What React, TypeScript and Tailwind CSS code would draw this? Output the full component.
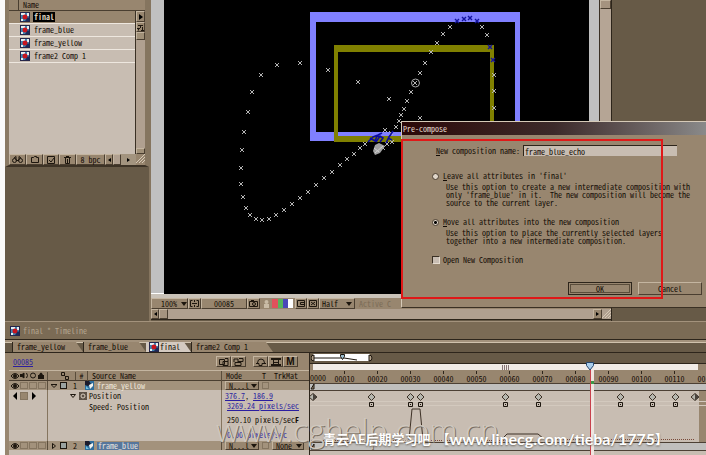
import React from "react";

const mono =
  "font-['Noto_Sans_Mono_CJK_SC','Noto_Sans_CJK_SC',monospace] [font-feature-settings:'hwid'] text-[8px] leading-[10px] text-[#140c05]";
const raised = "border border-t-[#c4b5a0] border-l-[#c4b5a0] border-r-[#4a3e30] border-b-[#4a3e30]";

type Point = [number, number];

const pathPoints: Point[] = [
  [389, 99], [358, 82], [328, 70], [300, 63], [277, 65], [261, 75], [252, 92], [248, 112], [244, 132],
  [242, 150], [241, 168], [241, 184], [243, 197], [246, 208], [250, 215], [256, 219], [262, 220],
  [269, 219], [276, 215], [284, 210], [292, 204], [300, 198], [308, 192], [316, 185], [324, 178],
  [332, 172], [340, 165], [347, 159], [354, 154], [360, 148], [365, 144], [385, 130], [391, 133], [396, 127],
  [399, 121], [401, 115], [404, 109], [407, 101], [411, 92], [415, 83], [420, 73], [425, 63],
  [431, 52], [437, 43], [443, 34], [450, 27], [482, 27], [487, 35], [494, 75],
  [494, 91], [494, 108], [420, 118], [383, 148], [387, 144], [392, 142],
];
const bluePoints: Point[] = [
  [457, 21], [464, 19], [470, 18], [477, 21], [490, 47], [493, 60],
];

const crosses = (points: Point[]) =>
  points.map(([x, y]) => `M${x - 2} ${y - 2}l4 4m0-4l-4 4`).join("");

function CompIcon() {
  return (
    <svg width="10" height="10" viewBox="0 0 10 10" className="shrink-0" aria-hidden="true">
      <rect width="10" height="10" fill="#26264a" />
      <rect x="1" y="1" width="8" height="8" fill="#3f86b4" />
      <path d="M1 1h4v2H1zM7 1h2v3H7zM1 7h2v2H1z" fill="#e8eef2" />
      <circle cx="5" cy="5" r="2.500" fill="#c8141e" />
      <path d="M5 9l3-4 1 1v3z" fill="#1c2a5c" />
    </svg>
  );
}

function LayerIcon() {
  return (
    <svg width="9" height="9" viewBox="0 0 9 9" className="shrink-0" aria-hidden="true">
      <rect width="9" height="9" fill="#2f6d9c" />
      <path d="M0 0h4l2 3-3 2-3-1z" fill="#1c1c2c" />
      <path d="M4 4l4-2v3l-3 3z" fill="#f2f2ee" />
      <path d="M1 5l3 3H1z" fill="#77c4dd" />
    </svg>
  );
}

function Eye() {
  return (
    <svg width="8" height="8" viewBox="0 0 8 8" className="shrink-0" aria-hidden="true">
      <path d="M0 4q4-5 8 0q-4 5-8 0z" fill="none" stroke="#1d160e" />
      <circle cx="4" cy="4" r="2" fill="#1d160e" />
    </svg>
  );
}

const projectItems = ["final", "frame_blue", "frame_yellow", "frame2 Comp 1"];

function ProjectPanel() {
  return (
    <section className="flex h-[167px] w-[144px] shrink-0 flex-col border-r-4 border-b-2 border-l-4 border-r-[#85755f] border-b-[#3d3326] border-l-[#8a7a64]">
      <header className="flex h-[11px] items-center border-b border-[#4a3e30] bg-[#98866f]">
        <span className="h-full w-[10px] border-r border-[#4a3e30]" />
        <h2 className="pl-1">Name</h2>
      </header>
      <div className="flex min-h-0 flex-1">
        <ul className="flex-1 bg-[#c8bdb2]">
          {projectItems.map((name, i) => (
            <li
              key={name}
              className={`flex h-[13px] items-center gap-[3px] border-b border-[#eee7df] pl-[11px] ${i === 0 ? "bg-[#98866f]" : ""}`}
            >
              <CompIcon />
              <span className={i === 0 ? "bg-black px-px font-bold text-[#d8cbbb]" : "px-px"}>{name}</span>
            </li>
          ))}
        </ul>
        <div className="flex w-[10px] flex-col border-l border-[#3a3024] bg-[#b0a090]">
          <button aria-label="Panel menu" className={`grid h-[11px] place-items-center bg-[#98866f] ${raised}`}>
            <svg width="4" height="6"><path d="M0 0l4 3-4 3z" fill="#000" /></svg>
          </button>
          <button aria-label="Flowchart" className={`grid h-[10px] place-items-center bg-[#98866f] ${raised}`}>
            <svg width="7" height="7" fill="none" stroke="#1d160e"><path d="M1 1.500h5M3.500 1v3M1.500 4v2.500M0 4.500h3M5.500 3v3.500M4 6.500h3" /></svg>
          </button>
          <span className={`h-2 bg-[#a09078] ${raised}`} />
          <span className="flex-1" />
          <span className={`h-[6px] bg-[#a09078] ${raised}`} />
        </div>
      </div>
      <footer className="flex h-[11px] shrink-0 bg-[#98866f]">
        <button aria-label="Find" className={`grid w-[17px] place-items-center ${raised}`}>
          <svg width="11" height="7" fill="none" stroke="#1d160e"><circle cx="2.500" cy="4.500" r="2" /><circle cx="8.500" cy="4.500" r="2" /><path d="M2 2l2-1.500v4h3v-4L9 2" /></svg>
        </button>
        <button aria-label="New folder" className={`grid w-[17px] place-items-center ${raised}`}>
          <svg width="8" height="7" fill="none" stroke="#1d160e"><path d="M.5 6.500v-5h2l1-1h2v1h2v5z" /></svg>
        </button>
        <button aria-label="New composition" className={`grid w-[16px] place-items-center ${raised}`}>
          <svg width="8" height="8" fill="none" stroke="#1d160e"><path d="M.5.5h7v7h-7zM2 4l2 2 3-4" /></svg>
        </button>
        <button aria-label="Delete" className={`grid w-[17px] place-items-center ${raised}`}>
          <svg width="7" height="8" fill="none" stroke="#1d160e"><path d="M0 1.500h7M2 .5h3M1.500 2v5.500h4V2M3.500 3v4" /></svg>
        </button>
        <button className={`flex w-[29px] items-center justify-center whitespace-nowrap leading-none ${raised}`}>8 bpc</button>
        <span className={`grid w-[8px] place-items-center ${raised}`}>
          <svg width="3" height="4"><path d="M3 0L0 2l3 2z" fill="#000" /></svg>
        </span>
        <span className={`w-[8px] bg-[#b0a090] ${raised}`} />
        <span className="flex flex-1 items-center justify-center bg-[#a3947f]">
          <svg width="3" height="4"><path d="M0 0l3 2-3 2z" fill="#000" /></svg>
        </span>
        <Grip />
      </footer>
    </section>
  );
}

function Grip() {
  return (
    <svg width="9" height="9" viewBox="0 0 9 9" className="shrink-0" stroke="#d6c9b6" aria-hidden="true">
      <path d="M0 9l9-9M3 9l6-6M6 9l3-3" />
    </svg>
  );
}

function CompositionWindow() {
  return (
    <section className="flex min-w-0 flex-1 flex-col border-r border-l-2 border-r-[#2d251b] border-l-[#85755f]">
      <div className="flex h-[294px]">
        <div className="w-[13px] shrink-0 border-b border-white bg-[#c0c0c0]" />
        <div className="min-w-0 flex-1 overflow-hidden bg-black">
          <svg width="425" height="294" viewBox="164 0 425 294" role="img" aria-label="Composition preview">
            <path d="M310 12h210v129H310zM316 22v110h199V22z" fill="#8080ff" fillRule="evenodd" />
            <path d="M334 45h160v97H334zM338 52v84h152V52z" fill="#808000" fillRule="evenodd" />
            <path d={crosses(pathPoints)} stroke="#b4b4b4" fill="none" />
            <path d={crosses(bluePoints)} stroke="#1414a0" strokeWidth="1.400" fill="none" />
            <path
              d="M368 142l5-5 5-2 4-2M370 138l5 3 2-5 4 1M376 142l4-6 3 2-3 4M386 143l3-6 4-6M388 138l4 2"
              stroke="#0c0ca0"
              strokeWidth="1.600"
              fill="none"
            />
            <path d="M375 145l4-2 6 3-5 7-5 2-2-4z" fill="#a2a2a2" />
            <path d="M375 153l8-7M374 148l5 4" stroke="#d0d0d0" />
            <circle cx="415.500" cy="83" r="4" stroke="#aaa" fill="none" />
          </svg>
        </div>
        <div className="w-[10px] shrink-0 bg-[#c0c0c0]" />
        <div className="w-[12px] shrink-0 border-l border-[#3a3024] bg-[#b5a595]">
          <div className={`h-[9px] bg-[#a5937f] ${raised}`} />
        </div>
      </div>
      <div className="h-[4px] shrink-0 bg-[#c9c2b8]" />
      <div className="flex h-[11px] shrink-0 items-center bg-[#98866f] whitespace-nowrap">
        <button className={`flex h-full w-[37px] items-center justify-end gap-1 ${raised}`}>
          100%
          <Down />
        </button>
        <button aria-label="Safe zones" className={`grid h-full w-[13px] place-items-center ${raised}`}>
          <svg width="9" height="7" fill="none" stroke="#1d160e"><path d="M2.500.5h-2v6h2M6.500.5h2v6h-2M4.500 0v2M4.500 5v2M2 3.500h5" /></svg>
        </button>
        <button className={`h-full w-[46px] leading-none ${raised}`}>00085</button>
        <button aria-label="Snapshot" className={`grid h-full w-[13px] place-items-center ${raised}`}>
          <svg width="9" height="7" fill="none" stroke="#1d160e"><path d="M.5 1.500h8v5h-8z" /><circle cx="5" cy="4" r="1.500" /><path d="M2 .5h3" /></svg>
        </button>
        <span className="grid w-[12px] place-items-center">
          <svg width="5" height="8" fill="#c9bba6"><circle cx="2.500" cy="2" r="2" /><path d="M0 4h5v4H0z" /></svg>
        </span>
        <button aria-label="Channels" className="flex h-[9px] w-[21px] bg-white">
          <span className="h-full w-[6px] bg-[#e0505c]" />
          <span className="h-full w-[5px] bg-[#56b45c]" />
          <span className="h-full w-[5px] bg-[#4a48b8]" />
        </button>
        <button aria-label="Region of interest" className={`ml-[2px] grid h-full w-[12px] place-items-center ${raised}`}>
          <svg width="8" height="7" fill="none" stroke="#1d160e"><path d="M.5.5h7v6h-7zM3.500 2.500h4v2h-4z" /></svg>
        </button>
        <button aria-label="Transparency grid" className={`grid h-full w-[12px] place-items-center ${raised}`}>
          <svg width="8" height="7" fill="none" stroke="#1d160e"><path d="M.5.5h7v6h-7zM2 2l4 3M6 2L2 5" /></svg>
        </button>
        <button className={`flex h-full w-[36px] items-center justify-between px-[2px] ${raised}`}>
          Half
          <Down />
        </button>
        <span className="pl-1 text-[#7b6c57]">Active C</span>
      </div>
      <div className="flex h-[11px] shrink-0 border-b border-[#2d251b] bg-[#b0a090]">
        <span className={`grid w-[8px] place-items-center bg-[#98866f] ${raised}`}>
          <svg width="3" height="4"><path d="M3 0L0 2l3 2z" fill="#000" /></svg>
        </span>
        <span className={`w-[9px] bg-[#a5937f] ${raised}`} />
        <span className="flex-1" />
        <span className={`grid w-[9px] place-items-center bg-[#98866f] ${raised}`}>
          <svg width="3" height="4"><path d="M0 0l3 2-3 2z" fill="#000" /></svg>
        </span>
        <Grip />
      </div>
    </section>
  );
}

function Down() {
  return (
    <svg width="6" height="4" className="shrink-0" aria-hidden="true">
      <path d="M0 0h6L3 4z" fill="#1d160e" />
    </svg>
  );
}

const radio =
  "size-[7px] shrink-0 appearance-none rounded-full border border-[#4a3e30] bg-[#e0d6ca] checked:bg-[radial-gradient(circle,#000_0_1px,#e0d6ca_2px)]";

function PrecomposeDialog() {
  return (
    <section
      role="dialog"
      aria-label="Pre-compose"
      className="absolute top-[121px] right-0 h-[187px] w-[305px] border-t border-b border-l border-t-[#d6cab8] border-b-[#3a3024] border-l-[#d6cab8] bg-[#98866f] whitespace-nowrap"
    >
      <h2 className="flex h-[13px] items-center bg-linear-to-r from-[#2b0808] via-[#3c2a2a] to-[#8a8a8a] pl-px text-[#e6dcd0]">
        Pre-compose
      </h2>
      <form className="flex flex-col pl-[30px]" onSubmit={(e) => e.preventDefault()}>
        <div className="flex items-center gap-[3px] pt-[10px] pl-[4px]">
          <label htmlFor="comp-name"><u>N</u>ew composition name:</label>
          <input
            id="comp-name"
            defaultValue="frame_blue_echo"
            className="h-[11px] w-[154px] border-t border-l border-[#2d251b] bg-[#c8bdb2] pl-px outline-none"
          />
        </div>
        <div className="flex items-center gap-1 pt-[15px]">
          <input type="radio" id="leave" name="mode" className={radio} />
          <label htmlFor="leave"><u>L</u>eave all attributes in 'final'</label>
        </div>
        <p className="pt-[2px] pl-[14px] leading-[8px]">
          Use this option to create a new intermediate composition with<br />
          only 'frame_blue' in it.&nbsp; The new composition will become the<br />
          source to the current layer.
        </p>
        <div className="flex items-center gap-1 pt-[10px]">
          <input type="radio" id="move" name="mode" defaultChecked className={radio} />
          <label htmlFor="move"><u>M</u>ove all attributes into the new composition</label>
        </div>
        <p className="pt-[2px] pl-[14px] leading-[8px]">
          Use this option to place the currently selected layers<br />
          together into a new intermediate composition.
        </p>
        <div className="flex items-center gap-[3px] pt-[10px]">
          <input type="checkbox" id="open" className="size-[8px] shrink-0 appearance-none border border-t-[#3a3024] border-r-[#e6dccf] border-b-[#e6dccf] border-l-[#3a3024] bg-[#c8bdb2]" />
          <label htmlFor="open">Open New Composition</label>
        </div>
        <div className="flex justify-end gap-[6px] pt-[17px] pr-[4px]">
          <button type="submit" className="h-[13px] w-[64px] border border-[#2d251b] p-px leading-none">
            <span className="grid h-full place-items-center border border-[#5a4d3b]">OK</span>
          </button>
          <button type="button" className={`h-[13px] w-[64px] leading-none ${raised}`}>Cancel</button>
        </div>
      </form>
    </section>
  );
}

const tabs = [
  { name: "frame_yellow", width: "w-[71px]" },
  { name: "frame_blue", width: "w-[63px]" },
  { name: "final", width: "w-[45px]" },
  { name: "frame2 Comp 1", width: "w-[82px]" },
];

function Tabs() {
  return (
    <nav className="flex h-[11px] items-end border-t border-b border-t-[#d0c2ad] border-b-[#2d251b] bg-[#675a47] pl-[7px]">
      {tabs.map((t) => (
        <button
          key={t.name}
          className={`flex h-[10px] items-center gap-px whitespace-nowrap leading-none [clip-path:polygon(0_0,calc(100%-7px)_0,100%_100%,0_100%)] ${t.width} ${t.name === "final" ? "bg-[#d4cac0] pl-[3px]" : "border-l border-[#2d251b] bg-[#98866f] pl-1"}`}
        >
          {t.name === "final" && <CompIcon />}
          {t.name}
        </button>
      ))}
    </nav>
  );
}

function Toolbar() {
  return (
    <div className="flex h-[17px] items-center bg-[#98866f] pr-[11px] pl-1">
      <a href="#time" className="text-[#2c1fa0] underline">00085</a>
      <span className="flex-1" />
      <button aria-label="Shy" className={`grid h-[11px] w-[15px] place-items-center ${raised}`}>
        <svg width="10" height="8" fill="none" stroke="#1d160e"><path d="M.5 1.500h5v5h-5zM4 3.500h5v4H4zM6 .5h3v3" /></svg>
      </button>
      <button aria-label="Frame blend" className={`grid h-[11px] w-[15px] place-items-center ${raised}`}>
        <svg width="11" height="8" fill="none" stroke="#1d160e"><path d="M1 4V1h4v3M5 3.500h5v-3H6M2 4.500h6v3H2z" /></svg>
      </button>
      <span className="w-[7px]" />
      <button aria-label="Hide shy layers" className={`grid h-[11px] w-[15px] place-items-center ${raised}`}>
        <svg width="10" height="8" fill="none" stroke="#1d160e"><path d="M0 5.500h3v2h3v-2h4M1.500 5q0-4 3.500-4t3.500 4" /></svg>
      </button>
      <button aria-label="Enable blending" className={`grid h-[11px] w-[15px] place-items-center ${raised}`}>
        <svg width="10" height="8" fill="none" stroke="#1d160e"><path d="M0 1h10M0 7h10" strokeWidth="2" /><path d="M2.500 1v6M7.500 1v6M3 4.500h4" /></svg>
      </button>
      <button aria-label="Motion blur" className={`grid h-[11px] w-[15px] place-items-center font-['Liberation_Sans',sans-serif] text-[10px] leading-none font-bold ${raised}`}>M</button>
    </div>
  );
}

function LayerRow({ index, name, matte }: { index: number; name: string; matte?: boolean }) {
  return (
    <div className="flex h-[9px] items-center bg-[#a3927c] leading-none">
      <div className="flex h-full w-[39px] items-center gap-px border-r border-[#5a4d3b] pl-[2px]">
        <Eye />
        <span className="h-[7px] w-[8px] border border-[#857560]" />
        <span className="h-[7px] w-[8px] border border-[#857560]" />
        <span className="h-[7px] w-[8px] border border-[#857560]" />
      </div>
      <div className="flex w-[173px] items-center gap-[3px] pl-[3px]">
        {index === 1 ? (
          <svg width="6" height="4" fill="none" stroke="#1d160e"><path d="M0 .5h6L3 3.500z" /></svg>
        ) : (
          <svg width="6" height="6" fill="none" stroke="#1d160e"><path d="M1.500.5v5l3-2.500z" /></svg>
        )}
        <span className="size-[7px] border border-[#1d160e] bg-[#9aa29f]" />
        <span className="w-[12px] pl-[3px]">{index}</span>
        <LayerIcon />
        <span className={matte ? "bg-[#57769c] px-px text-[#e8e4df]" : "text-[#f0e8dd]"}>{name}</span>
      </div>
      <div className="flex h-full flex-1 items-center gap-[3px] border-l border-[#5a4d3b] pl-[3px] whitespace-nowrap">
        <button className={`flex h-[9px] w-[34px] items-center gap-[2px] bg-[#98866f] pl-[3px] leading-none ${raised}`}>N...l <Down /></button>
        <span className="size-[7px] border border-[#857560]" />
        {matte && (
          <button className={`flex h-[9px] w-[32px] items-center gap-[4px] bg-[#98866f] pl-[3px] leading-none ${raised}`}>None <Down /></button>
        )}
      </div>
    </div>
  );
}

const ticks = ["00010", "00020", "00030", "00040", "00050", "00060", "00070", "00080", "00090", "00100", "00110", "00120"];
const keys = [370, 409, 419, 504, 537, 619, 651, 674];

function TimeGraph() {
  return (
    <div className="min-w-0 flex-1 overflow-hidden border-l border-[#2d251b] bg-[#c8bdb2]">
      <div className="flex h-[10px] items-center bg-[#675a47] pl-px">
        <svg width="62" height="8" viewBox="0 0 62 8" aria-hidden="true">
          <path d="M2 0h57v7H2z" fill="#fff" />
          <path d="M3 4h30l13 2" stroke="#1d160e" fill="none" />
          <path d="M29.500.5h4v2l-2 3-2-3z" stroke="#1d160e" fill="#9dbfd0" />
          <path d="M3 1a3 3 0 000 6zM58 1a3 3 0 010 6z" fill="#b5a48d" stroke="#1d160e" />
        </svg>
      </div>
      <div className="flex h-[7px] border-t border-[#2d251b] bg-[#98866f] pr-[8px]">
        <div className="ml-[3px] flex flex-1 items-center justify-center bg-[#f1ece7]">
          <svg width="8" height="5" stroke="#877" aria-hidden="true"><path d="M.5 0v5M2.500 0v5M4.500 0v5M6.500 0v5" /></svg>
        </div>
      </div>
      <div className="flex h-[13px] items-end bg-[#98866f] whitespace-nowrap">
        <span className="w-[18px] shrink-0 leading-[11px]">0000</span>
        {ticks.map((t) => (
          <span key={t} className="flex w-[33px] shrink-0 flex-col items-center leading-[9px]">
            <i className="h-[3px] w-px bg-[#2d251b]" />
            {t}
          </span>
        ))}
      </div>
      <svg width="397" height="72" viewBox="309 383 397 72" className="block" role="img" aria-label="Position keyframes and speed graph">
        <path d="M309 384h397v6H309zM309 443h397v7H309z" fill="#c0bfbd" />
        <path d="M309 383.500h397M309 390.500h397M309 442.500h397M309 450.500h397" stroke="#4c4034" />
        <path d="M698 391h8v51h-8z" fill="#98866f" />
        <path d="M309 401.500h397M309 405.500h397" stroke="#d3c9be" />
        <path d="M310 440.500h98M420 440.500h86M554 439.500h140" stroke="#7a4a3a" strokeDasharray="1 1" />
        <path d="M408 440l3-31h8l3 31M500 440l6-6h31l6 5" fill="none" stroke="#3d3126" />
        {keys.map((x) => (
          <g key={x} transform={`translate(${x - 3} 397)`}>
            <path d="M0 0l3.500-3.500L7 0 3.500 3.500z" fill="#b6b6ae" stroke="#3d3126" />
            <path d="M1.500 5.500h4v4h-4z" fill="#c8bdb2" stroke="#1d160e" />
            <path d="M3 7h1v1H3z" fill="#1d160e" />
          </g>
        ))}
        {[312, 694].map((x) => (
          <g key={x}>
            <path d={`M${x - 4} 397l4-3.500 4 3.500-4 3.500z`} fill="#b6b6ae" stroke="#3d3126" />
            <path d={`M${x} 393.500l4 3.500-4 3.500z`} fill="#4a443e" />
          </g>
        ))}
        <path d="M310 389l3-5v5zM310 449l3-5v5z" fill="#98866f" stroke="#1d160e" />
      </svg>
    </div>
  );
}

function Timeline() {
  return (
    <section className="flex h-[134px] flex-col overflow-hidden border-t border-[#a3927c] bg-[#c8bdb2]">
      <header className="flex h-[17px] shrink-0 items-center gap-[3px] bg-[#7b6b55] pl-[5px]">
        <CompIcon />
        <h2 className="text-[#b3a58f]">final * Timeline</h2>
      </header>
      <div className="h-[3px] shrink-0 border-t border-[#2d251b] bg-[#a3927c]" />
      <Tabs />
      <div className="flex min-h-0 flex-1 border-l-4 border-[#98866f]">
        <div className="w-[300px] shrink-0">
          <Toolbar />
          <div className="flex h-[11px] items-center border-t border-b border-t-[#c4b5a0] border-b-[#4a3e30] bg-[#98866f] whitespace-nowrap">
            <div className="flex w-[39px] items-center gap-px border-r border-[#5a4d3b] pl-[2px]">
              <Eye />
              <svg width="8" height="7" stroke="#1d160e" fill="#1d160e"><path d="M0 2.500h2L4 1v5L2 4.500H0z" /><path d="M6.500 1q2 2.500 0 5" fill="none" /></svg>
              <svg width="8" height="7" stroke="#1d160e" fill="none"><circle cx="4" cy="3.500" r="2.500" /></svg>
              <svg width="6" height="7" fill="#1d160e"><path d="M0 3h6v4H0zM1 3q2-5 4 0z" /></svg>
            </div>
            <span className="grid w-[28px] place-items-center border-r border-[#5a4d3b] pl-[7px]">
              <svg width="8" height="8" fill="none" stroke="#1d160e"><path d="M.5.5h3v3h-3zM4.500 4.500h3v3h-3zM3 3l2 2" /></svg>
            </span>
            <span className="w-[11px] text-center">#</span>
            <span className="flex-1 border-l border-[#5a4d3b] pl-1">Source Name</span>
            <span className="w-[88px] border-l border-[#5a4d3b] pl-1 whitespace-pre">Mode     T  TrkMat</span>
          </div>
          <LayerRow index={1} name="frame_yellow" />
          <div className="flex h-[51px]">
            <div className="flex w-[39px] items-start gap-[3px] border-r border-[#85755f] pt-[2px] pl-[4px]">
              <svg width="4" height="8"><path d="M4 0L0 4l4 4z" fill="#000" /></svg>
              <span className="size-2 border border-[#857560] bg-[#98866f]" />
              <svg width="6" height="8"><path d="M1 0l4 4-4 4z" fill="#000" /></svg>
            </div>
            <div className="w-[173px] pl-[22px]">
              <div className="flex h-[11px] items-center gap-[2px] pt-px">
                <svg width="7" height="4" fill="none" stroke="#1d160e"><path d="M.5.5h5l-2.500 3z" /></svg>
                <span className="grid size-[8px] place-items-center bg-[#5c5146]">
                  <svg width="6" height="6" fill="none" stroke="#d8cdbf"><circle cx="3" cy="3" r="2" /></svg>
                </span>
                Position
              </div>
              <div className="pt-px pl-[19px]">Speed: Position</div>
            </div>
            <div className="flex-1 border-l border-[#85755f] pl-[3px] whitespace-nowrap">
              <div className="h-[11px] pt-px">
                <a href="#x" className="text-[#2c1fa0] underline">376.7</a>, <a href="#y" className="text-[#2c1fa0] underline">186.9</a>
              </div>
              <div className="pl-[2px]"><a href="#speed" className="text-[#2c1fa0] underline">3269.24 pixels/sec</a></div>
              <div className="pt-[4px] pl-[2px]">250.10 pixels/sec<b>F</b></div>
              <div className="pt-[5px] pl-[2px] text-[#2c1fa0]">0.00 pixels/sec</div>
            </div>
          </div>
          <LayerRow index={2} name="frame_blue" matte />
        </div>
        <TimeGraph />
      </div>
    </section>
  );
}

export default function App() {
  return (
    <main className={`relative overflow-hidden bg-[#fafafa] pl-[5px] ${mono}`}>
      <div className="flex h-[321px] bg-[#675a47] pr-[94px]">
        <ProjectPanel />
        <CompositionWindow />
      </div>
      <Timeline />
      <PrecomposeDialog />

      <div className="pointer-events-none absolute top-[139px] right-[43px] h-[160px] w-[262px] border-2 border-[#e01818]" />

      <svg className="pointer-events-none absolute top-[361px] left-[584px]" width="12" height="94" aria-hidden="true">
        <path d="M6 9h4v85H6z" fill="#efe6e0" />
        <path d="M7 20h3v3H7z" fill="#3c9a48" />
        <path d="M6.500 8v86" stroke="#c8414c" />
        <path d="M2.500 1.500h7v3L6 9 2.500 4.500z" fill="#a9cdea" stroke="#24466e" />
      </svg>

      <p className="pointer-events-none absolute top-[414px] left-[216px] font-['Open_Sans',sans-serif] text-[32px] leading-[32px] font-light whitespace-nowrap text-[#cfc8bf] [text-shadow:1px_1px_0_#7b7064]">
        www.cghelp.com.cn
      </p>
      <p className="pointer-events-none absolute top-[430px] left-[323px] flex items-center font-['Lato','Noto_Sans_CJK_SC',sans-serif] text-[13px] leading-[18px] font-bold whitespace-nowrap text-white [font-feature-settings:normal] [text-shadow:0_1px_2px_#6d645a]">
        <span className="pr-[6px]">青云AE后期学习吧</span>
        <span>【</span>
        <span className="text-[16px]">www.linecg.com/tieba/1775</span>
        <span>】</span>
      </p>
    </main>
  );
}
